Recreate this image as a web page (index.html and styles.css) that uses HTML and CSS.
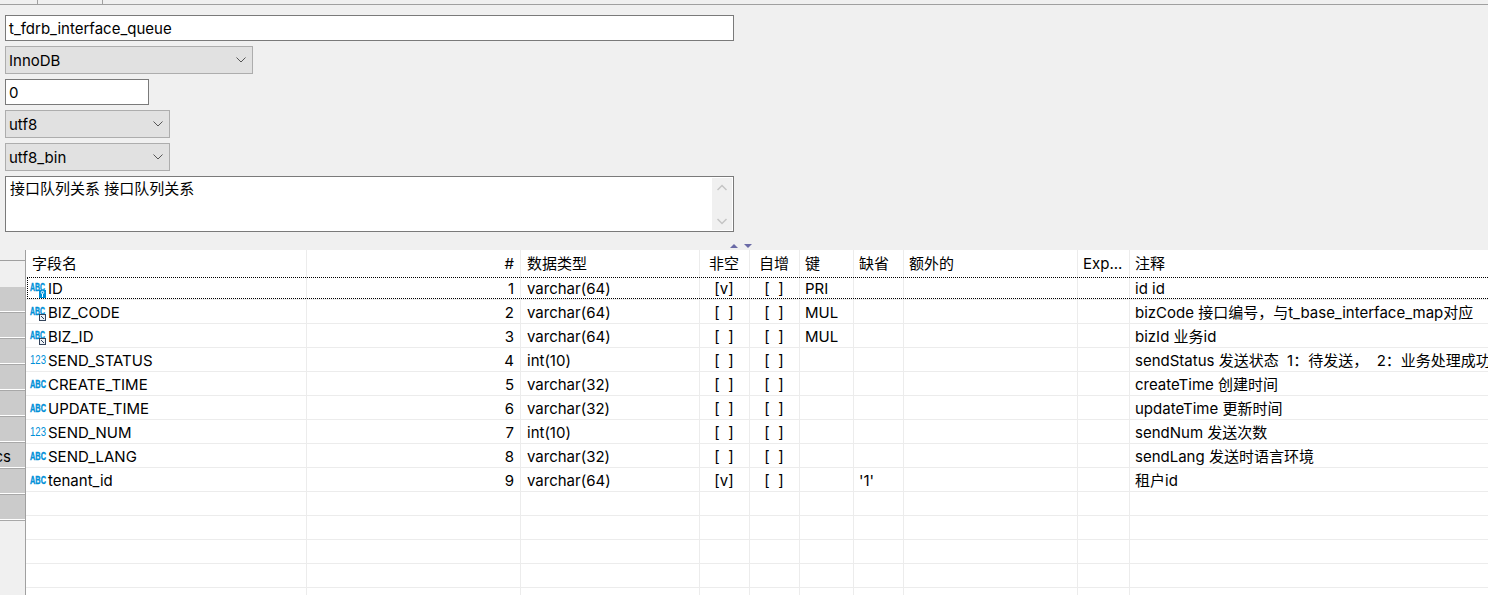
FILE: index.html
```html
<!DOCTYPE html>
<html lang="zh">
<head>
<meta charset="utf-8">
<title>t_fdrb_interface_queue</title>
<link rel="stylesheet" href="styles.css">
</head>
<body>
<div class="tabs"><span class="tab first"></span><span class="tab second"></span></div>
<form class="form">
  <div class="input name">t_fdrb_interface_queue</div>
  <div class="select engine"><span>InnoDB</span><svg class="chev" viewBox="0 0 10 6"><path d="M.5.5 5 5 9.500.5"/></svg></div>
  <div class="input auto">0</div>
  <div class="select charset"><span>utf8</span><svg class="chev" viewBox="0 0 10 6"><path d="M.5.5 5 5 9.500.5"/></svg></div>
  <div class="select charset"><span>utf8_bin</span><svg class="chev" viewBox="0 0 10 6"><path d="M.5.5 5 5 9.500.5"/></svg></div>
  <div class="memo">
    <div class="memo-text">接口队列关系 接口队列关系</div>
    <div class="scroll">
      <svg class="arrow" viewBox="0 0 10 7"><path d="M.5 6 5 1.500 9.500 6"/></svg>
      <svg class="arrow" viewBox="0 0 10 7"><path d="M.5 1 5 5.500 9.500 1"/></svg>
    </div>
  </div>
</form>
<div class="splitter"><i class="up"></i><i class="down"></i></div>
<div class="main">
  <aside class="side">
    <div class="side-top"></div>
    <div class="btn"></div><div class="btn"></div><div class="btn"></div><div class="btn"></div><div class="btn"></div><div class="btn"></div>
    <div class="btn"><span>cs</span></div>
    <div class="btn"></div><div class="btn"></div>
  </aside>
  <section class="grid">
    <div class="row head">
      <div class="c">字段名</div><div class="c r">#</div><div class="c">数据类型</div><div class="c f">非空</div><div class="c f">自增</div><div class="c">键</div><div class="c">缺省</div><div class="c">额外的</div><div class="c">Exp...</div><div class="c">注释</div>
    </div>
    <div class="row focus">
      <div class="c n"><svg class="ico" viewBox="0 0 16 18"><text class="abc" x="0" y="11" textLength="15" lengthAdjust="spacingAndGlyphs">ABC</text><rect class="pk" x="9" y="10" width="7" height="8"/><circle class="key" cx="12.500" cy="12.500" r="1.200"/><path class="key" d="M12.500 14v3"/></svg>ID</div><div class="c r">1</div><div class="c">varchar(64)</div><div class="c f">[v]</div><div class="c f">[  ]</div><div class="c">PRI</div><div class="c"></div><div class="c"></div><div class="c"></div><div class="c">id id</div>
    </div>
    <div class="row">
      <div class="c n"><svg class="ico" viewBox="0 0 16 18"><text class="abc" x="0" y="11" textLength="15" lengthAdjust="spacingAndGlyphs">ABC</text><rect class="mul" x="9.500" y="10.500" width="6" height="6"/><path class="mul-a" d="M11 12l3 3"/></svg>BIZ_CODE</div><div class="c r">2</div><div class="c">varchar(64)</div><div class="c f">[  ]</div><div class="c f">[  ]</div><div class="c">MUL</div><div class="c"></div><div class="c"></div><div class="c"></div><div class="c">bizCode 接口编号，与t_base_interface_map对应</div>
    </div>
    <div class="row">
      <div class="c n"><svg class="ico" viewBox="0 0 16 18"><text class="abc" x="0" y="11" textLength="15" lengthAdjust="spacingAndGlyphs">ABC</text><rect class="mul" x="9.500" y="10.500" width="6" height="6"/><path class="mul-a" d="M11 12l3 3"/></svg>BIZ_ID</div><div class="c r">3</div><div class="c">varchar(64)</div><div class="c f">[  ]</div><div class="c f">[  ]</div><div class="c">MUL</div><div class="c"></div><div class="c"></div><div class="c"></div><div class="c">bizId 业务id</div>
    </div>
    <div class="row">
      <div class="c n"><svg class="ico" viewBox="0 0 16 18"><text class="num" x="0" y="12" textLength="16" lengthAdjust="spacingAndGlyphs">123</text></svg>SEND_STATUS</div><div class="c r">4</div><div class="c">int(10)</div><div class="c f">[  ]</div><div class="c f">[  ]</div><div class="c"></div><div class="c"></div><div class="c"></div><div class="c"></div><div class="c">sendStatus 发送状态  1：待发送，  2：业务处理成功</div>
    </div>
    <div class="row">
      <div class="c n"><svg class="ico" viewBox="0 0 16 18"><text class="abc" x="0" y="12" textLength="16" lengthAdjust="spacingAndGlyphs">ABC</text></svg>CREATE_TIME</div><div class="c r">5</div><div class="c">varchar(32)</div><div class="c f">[  ]</div><div class="c f">[  ]</div><div class="c"></div><div class="c"></div><div class="c"></div><div class="c"></div><div class="c">createTime 创建时间</div>
    </div>
    <div class="row">
      <div class="c n"><svg class="ico" viewBox="0 0 16 18"><text class="abc" x="0" y="12" textLength="16" lengthAdjust="spacingAndGlyphs">ABC</text></svg>UPDATE_TIME</div><div class="c r">6</div><div class="c">varchar(32)</div><div class="c f">[  ]</div><div class="c f">[  ]</div><div class="c"></div><div class="c"></div><div class="c"></div><div class="c"></div><div class="c">updateTime 更新时间</div>
    </div>
    <div class="row">
      <div class="c n"><svg class="ico" viewBox="0 0 16 18"><text class="num" x="0" y="12" textLength="16" lengthAdjust="spacingAndGlyphs">123</text></svg>SEND_NUM</div><div class="c r">7</div><div class="c">int(10)</div><div class="c f">[  ]</div><div class="c f">[  ]</div><div class="c"></div><div class="c"></div><div class="c"></div><div class="c"></div><div class="c">sendNum 发送次数</div>
    </div>
    <div class="row">
      <div class="c n"><svg class="ico" viewBox="0 0 16 18"><text class="abc" x="0" y="12" textLength="16" lengthAdjust="spacingAndGlyphs">ABC</text></svg>SEND_LANG</div><div class="c r">8</div><div class="c">varchar(32)</div><div class="c f">[  ]</div><div class="c f">[  ]</div><div class="c"></div><div class="c"></div><div class="c"></div><div class="c"></div><div class="c">sendLang 发送时语言环境</div>
    </div>
    <div class="row">
      <div class="c n"><svg class="ico" viewBox="0 0 16 18"><text class="abc" x="0" y="12" textLength="16" lengthAdjust="spacingAndGlyphs">ABC</text></svg>tenant_id</div><div class="c r">9</div><div class="c">varchar(64)</div><div class="c f">[v]</div><div class="c f">[  ]</div><div class="c"></div><div class="c">'1'</div><div class="c"></div><div class="c"></div><div class="c">租户id</div>
    </div>
    <div class="row"><div class="c"></div><div class="c"></div><div class="c"></div><div class="c"></div><div class="c"></div><div class="c"></div><div class="c"></div><div class="c"></div><div class="c"></div><div class="c"></div></div>
    <div class="row"><div class="c"></div><div class="c"></div><div class="c"></div><div class="c"></div><div class="c"></div><div class="c"></div><div class="c"></div><div class="c"></div><div class="c"></div><div class="c"></div></div>
    <div class="row"><div class="c"></div><div class="c"></div><div class="c"></div><div class="c"></div><div class="c"></div><div class="c"></div><div class="c"></div><div class="c"></div><div class="c"></div><div class="c"></div></div>
    <div class="row"><div class="c"></div><div class="c"></div><div class="c"></div><div class="c"></div><div class="c"></div><div class="c"></div><div class="c"></div><div class="c"></div><div class="c"></div><div class="c"></div></div>
    <div class="row"><div class="c"></div><div class="c"></div><div class="c"></div><div class="c"></div><div class="c"></div><div class="c"></div><div class="c"></div><div class="c"></div><div class="c"></div><div class="c"></div></div>
  </section>
</div>
</body>
</html>
```
FILE: styles.css
```css
* { box-sizing: border-box; }
html, body { margin: 0; height: 595px; overflow: hidden; }
body {
  background: #f0f0f0;
  color: #000;
  font: 15px/20px Inter, "Noto Sans CJK SC", sans-serif;
}
.tabs { display: flex; height: 5px; border-bottom: 1px solid #a0a0a0; }
.tab { border-right: 1px solid #a0a0a0; }
.tab.first { width: 38px; }
.tab.second { width: 65px; }

.form { display: flex; flex-direction: column; align-items: flex-start; gap: 5px; padding: 10px 0 0 5px; }
.input { height: 26px; padding: 3px 3px 0; background: #fff; border: 1px solid #7a7a7a; }
.name { width: 729px; }
.auto { width: 144px; }
.select {
  display: flex; align-items: center; justify-content: space-between;
  height: 28px; padding: 0 6px 0 3px;
  background: #e1e1e1; border: 1px solid #adadad;
}
.select span { padding-top: 2px; }
.engine { width: 248px; }
.charset { width: 165px; }
.chev { width: 10px; height: 6px; fill: none; stroke: #555; stroke-width: 1; }
.memo {
  display: flex; justify-content: space-between;
  width: 729px; height: 56px; padding: 1px;
  background: #fff; border: 1px solid #7a7a7a;
}
.memo-text { padding: 1px 3px 0; }
.scroll {
  display: flex; flex-direction: column; justify-content: space-between; align-items: center;
  width: 20px; padding: 6px 0 5px; background: #f0f0f0;
}
.arrow { width: 10px; height: 7px; fill: none; stroke: #c4c4c4; stroke-width: 1.500; }

.splitter { display: flex; justify-content: center; align-items: flex-end; gap: 6px; height: 18px; padding: 0 6px 2px 0; }
.splitter i { width: 0; height: 0; border-left: 4px solid transparent; border-right: 4px solid transparent; }
.splitter .up { border-bottom: 4px solid #6a6aa6; }
.splitter .down { border-top: 4px solid #6a6aa6; }

.main { display: flex; }
.side { flex: none; width: 26px; height: 345px; border-right: 1px solid #a0a0a0; overflow: hidden; }
.side-top { height: 11px; margin-bottom: 26px; border-bottom: 1px solid #a0a0a0; }
.btn {
  height: 26px; padding: 4px 0 0; overflow: hidden;
  background: #cbcbcb; border-bottom: 1px solid #a8a8a8; box-shadow: inset 0 -1px 0 #fff;
  display: flex; justify-content: flex-end; align-items: flex-start;
}
.btn span { margin-right: 14px; }

.grid { flex: 1; min-width: 0; background: #fff; overflow: hidden; height: 345px; }
.row {
  display: grid;
  grid-template-columns: 281px 214px 179px 50px 50px 54px 50px 174px 52px 358px;
  height: 24px;
  border-bottom: 1px solid #ececec;
}
.row.head { height: 26px; border-bottom: 0; }
.row.focus { position: relative; }
.row.focus::after {
  content: ""; position: absolute; left: 1px; right: 0; top: 1px; bottom: 0;
  border: 1px dotted #000; border-right: 0;
}
.c {
  min-width: 0; padding: 3px 0 0 6px;
  border-right: 1px solid #ececec;
  white-space: pre; overflow: hidden;
}
.c:nth-child(n+6) { padding-left: 5px; }
.c:last-child { border-right: 0; }
.head .c { padding-top: 4px; }
.r { padding: 3px 6px 0 0; text-align: right; }
.f { padding-left: 0; padding-right: 1px; text-align: center; }
.n { display: flex; align-items: flex-start; gap: 2px; padding-left: 4px; }
.ico { flex: none; width: 16px; height: 18px; margin-top: 1px; overflow: visible; }
.abc { font: bold 10px "Liberation Sans", sans-serif; fill: #0090d8; stroke: #0090d8; stroke-width: .35; }
.num { font: 12px "Liberation Sans", sans-serif; fill: #0090d8; }
.pk { fill: #0090d8; }
.key { fill: none; stroke: #fff; stroke-width: 1; }
.mul { fill: #eef2f6; stroke: #33435a; }
.mul-a { fill: none; stroke: #33435a; stroke-width: 1; }
```
